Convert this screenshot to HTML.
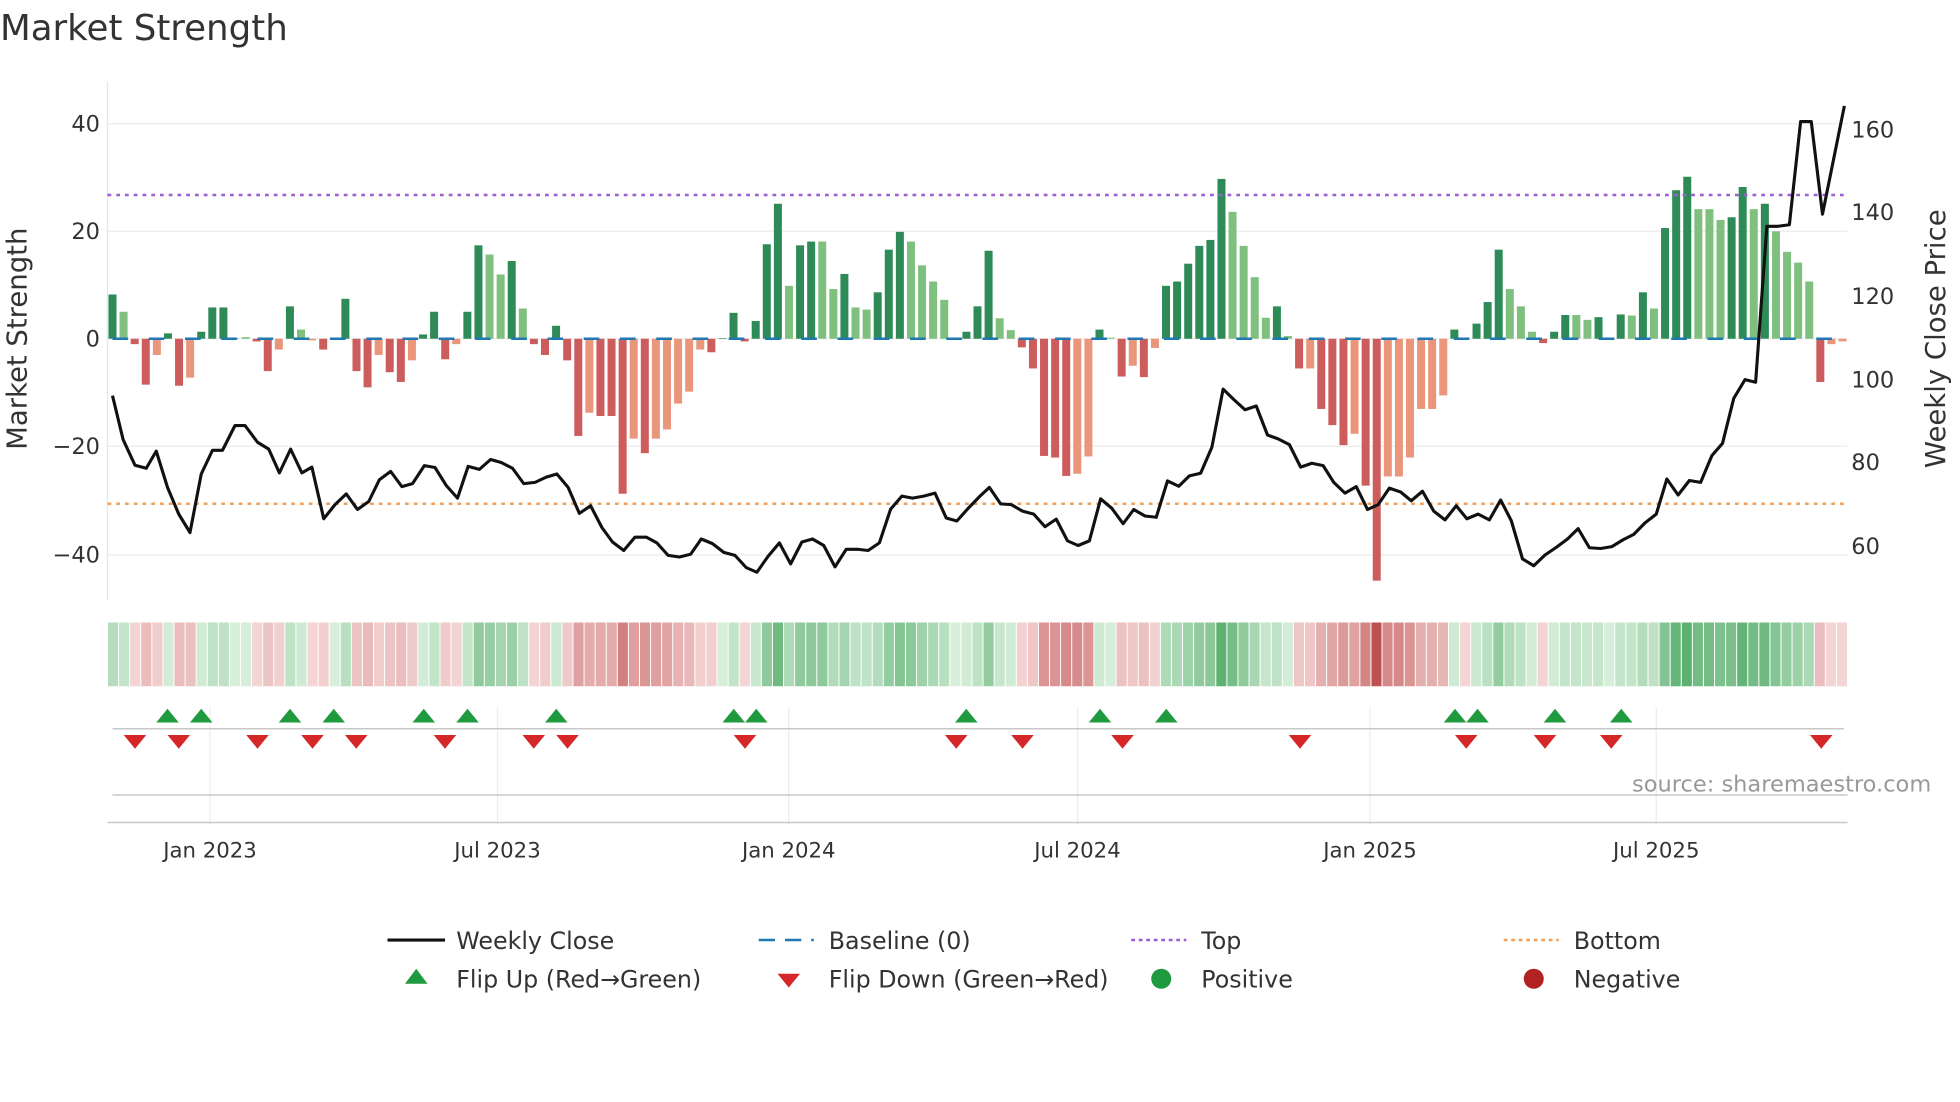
<!DOCTYPE html>
<html><head><meta charset="utf-8"><style>
html,body{margin:0;padding:0;background:#fff;}
svg{display:block;}
text{font-family:"DejaVu Sans","Liberation Sans",sans-serif;fill:#333;}
</style></head><body>
<svg id="s" width="1960" height="1102" viewBox="0 0 1568 881.6" xmlns="http://www.w3.org/2000/svg">
<text x="0" y="32" font-size="28.5">Market Strength</text>
<g id="grid" stroke="#ececec" stroke-width="1">
<line x1="86" y1="99" x2="1478" y2="99"/><line x1="86" y1="185" x2="1478" y2="185"/>
<line x1="86" y1="271" x2="1478" y2="271"/><line x1="86" y1="357" x2="1478" y2="357"/>
<line x1="86" y1="444" x2="1478" y2="444"/>
</g>
<line x1="86" y1="65" x2="86" y2="480" stroke="#e6e6e6"/>
<g font-size="18" text-anchor="end">
<text x="80" y="105">40</text><text x="80" y="191">20</text><text x="80" y="277">0</text>
<text x="80" y="363">−20</text><text x="80" y="450">−40</text>
</g>
<g font-size="18">
<text x="1481" y="110">160</text><text x="1481" y="176">140</text><text x="1481" y="243">120</text>
<text x="1481" y="310">100</text><text x="1481" y="376">80</text><text x="1481" y="443">60</text>
</g>
<text transform="translate(21,271) rotate(-90)" font-size="22" text-anchor="middle">Market Strength</text>
<text transform="translate(1556,271) rotate(-90)" font-size="22" text-anchor="middle">Weekly Close Price</text>
<g id="bars"></g>
<line x1="86" y1="156" x2="1478" y2="156" stroke="#9a5fd6" stroke-width="2" stroke-dasharray="3,4"/>
<line x1="86" y1="403" x2="1478" y2="403" stroke="#f0a05a" stroke-width="2" stroke-dasharray="3,4"/>
<line x1="90" y1="271" x2="1478" y2="271" stroke="#1f77b4" stroke-width="2" stroke-dasharray="12.5,16.5"/>
<polyline id="price" fill="none" stroke="#111" stroke-width="2.5" stroke-linejoin="round"/>
<g id="heat"></g>
<g stroke="#ececec">
<line x1="168" y1="566" x2="168" y2="660"/><line x1="398" y1="566" x2="398" y2="660"/>
<line x1="631" y1="566" x2="631" y2="660"/><line x1="862" y1="566" x2="862" y2="660"/>
<line x1="1096" y1="566" x2="1096" y2="660"/><line x1="1325" y1="566" x2="1325" y2="660"/>
</g>
<line x1="90" y1="583" x2="1475" y2="583" stroke="#c8c8c8" stroke-width="1.2"/>
<line x1="90" y1="636" x2="1478" y2="636" stroke="#c8c8c8" stroke-width="1.2"/>
<line x1="86" y1="658" x2="1478" y2="658" stroke="#c8c8c8" stroke-width="1.2"/>
<g id="marks"></g>
<text x="1545" y="633" font-size="18" text-anchor="end" style="fill:#999">source: sharemaestro.com</text>
<g font-size="17" text-anchor="middle">
<text x="168" y="686">Jan 2023</text><text x="398" y="686">Jul 2023</text><text x="631" y="686">Jan 2024</text>
<text x="862" y="686">Jul 2024</text><text x="1096" y="686">Jan 2025</text><text x="1325" y="686">Jul 2025</text>
</g>
<g font-size="19">
<line x1="310" y1="752" x2="356" y2="752" stroke="#111" stroke-width="2.5"/>
<text x="365" y="759">Weekly Close</text>
<line x1="607" y1="752" x2="651" y2="752" stroke="#1f77b4" stroke-width="2" stroke-dasharray="13,8"/>
<text x="663" y="759">Baseline (0)</text>
<line x1="905" y1="752" x2="949" y2="752" stroke="#9a5fd6" stroke-width="2" stroke-dasharray="3,3"/>
<text x="961" y="759">Top</text>
<line x1="1203" y1="752" x2="1247" y2="752" stroke="#f0a05a" stroke-width="2" stroke-dasharray="3,3"/>
<text x="1259" y="759">Bottom</text>
<polygon points="324,787 342,787 333,775" fill="#1f9a3e"/>
<text x="365" y="790">Flip Up (Red→Green)</text>
<polygon points="622,779 640,779 631,790" fill="#d62728"/>
<text x="663" y="790">Flip Down (Green→Red)</text>
<circle cx="929" cy="783" r="8" fill="#1f9a3e"/>
<text x="961" y="790">Positive</text>
<circle cx="1227" cy="783" r="8" fill="#b22222"/>
<text x="1259" y="790">Negative</text>
</g>
</svg>
<script>
var raw="8.2d,5l,-1r,-8.5r,-3o,1d,-8.7r,-7.2o,1.3d,5.8d,5.8d,0.1d,0.3l,-0.5r,-6r,-2o,6d,1.7l,-0.3o,-2r,0.1d,7.4d,-6r,-9r,-3o,-6.2r,-8r,-4o,0.8d,5d,-3.8r,-1o,5d,17.3d,15.6l,11.9l,14.4d,5.6l,-1r,-3r,2.4d,-4r,-18r,-13.7o,-14.3r,-14.3r,-28.7r,-18.5o,-21.2r,-18.5o,-16.8o,-12o,-9.8o,-2o,-2.5r,0.1d,4.8d,-0.5r,3.3d,17.5d,25d,9.8l,17.3d,18d,18l,9.2l,12d,5.8l,5.4l,8.6d,16.5d,19.8d,18l,13.6l,10.6l,7.2l,0.1l,1.3d,6d,16.3d,3.8l,1.6l,-1.6r,-5.5r,-21.7r,-22r,-25.4r,-25o,-21.8o,1.7d,0.2l,-7r,-5o,-7.1r,-1.7o,9.8d,10.6d,13.9d,17.2d,18.3d,29.6d,23.5l,17.2l,11.4l,3.9l,6d,0.5l,-5.5r,-5.5o,-13r,-16r,-19.7r,-17.6o,-27.2r,-44.8r,-25.5o,-25.5o,-22o,-13o,-13o,-10.5o,1.7d,-0.2r,2.8d,6.8d,16.5d,9.2l,6l,1.3l,-0.8r,1.3d,4.4d,4.4l,3.5l,4d,0.1d,4.5d,4.3l,8.6d,5.6l,20.5d,27.5d,30d,24l,24l,22l,22.5d,28.1d,24l,25d,19.9l,16.1l,14.1l,10.6l,-8r,-1o,-0.5o".split(",");
var NS="http://www.w3.org/2000/svg";
function el(t,a,p){var e=document.createElementNS(NS,t);for(var k in a)e.setAttribute(k,a[k]);p.appendChild(e);return e;}
var cols={d:"#2e8b57",l:"#80c07f",r:"#cd5c5c",o:"#e9967a"};
var n=raw.length,bars=document.getElementById("bars"),heat=document.getElementById("heat");
var step=(1474-90)/(n-1);
var hw=(1478-86)/n;
function mix(a,b,t){return "rgb("+[0,1,2].map(function(i){return Math.round(a[i]+(b[i]-a[i])*t)}).join(",")+")";}
for(var i=0;i<n;i++){
 var s=raw[i],v=parseFloat(s),c=s.slice(-1),x=90+i*step,h=Math.abs(v)*4.32;
 el("rect",{x:x-3.2,y:v>=0?271-h:271,width:6.4,height:Math.max(h,0.5),fill:cols[c]},bars);
 var col=v>=0?mix([214,238,218],[92,176,112],Math.min(v/30,1)):mix([244,214,214],[190,80,78],Math.min(-v/45,1));
 el("rect",{x:86+i*hw+0.4,y:498,width:hw-0.8,height:51,fill:col},heat);
}
var p1=[[180,1035],[197,1150],[216,1217],[234,1225],[250,1180],[268,1275],[286,1345],[304,1393],[322,1240],[340,1178],[356,1178],[376,1113],[392,1113],[412,1157],[430,1175],[447,1237],[465,1175],[483,1237],[499,1222],[518,1357],[536,1320],[554,1292],[572,1333],[590,1312],[607,1255],[625,1233],[643,1273],[660,1265],[679,1218],[696,1223],[714,1270],[732,1303],[749,1220],[767,1228],[785,1202],[802,1210],[820,1225],[838,1265],[856,1262],[874,1248],[891,1240],[909,1275],[927,1343],[945,1323],[963,1380],[980,1418],[998,1440],[1016,1405],[1034,1405],[1051,1420],[1069,1453],[1087,1457],[1105,1450],[1122,1410],[1140,1422],[1158,1445],[1176,1453],[1194,1485],[1211,1497],[1229,1455],[1247,1420],[1265,1475],[1283,1418],[1300,1410],[1318,1427],[1336,1483],[1354,1437],[1372,1437],[1389,1440],[1407,1420],[1425,1332],[1443,1298],[1460,1303],[1478,1298],[1496,1290],[1514,1355],[1531,1363],[1549,1330]];
var p2=[[0,1298],[15,1275],[33,1318],[50,1320],[68,1337],[86,1345],[104,1378],[122,1358],[140,1415],[157,1427],[175,1415],[193,1305],[211,1330],[229,1370],[246,1333],[264,1350],[282,1353],[300,1258],[318,1272],[335,1245],[353,1238],[371,1170],[389,1018],[406,1045],[424,1072],[442,1062],[460,1138],[477,1148],[495,1163],[513,1222],[531,1212],[549,1218],[566,1262],[584,1290],[602,1273],[620,1333],[637,1320],[655,1277],[673,1287],[690,1310],[708,1285],[726,1337],[744,1360],[762,1323],[779,1357],[797,1345],[815,1360],[833,1308],[850,1362],[868,1462],[886,1480],[904,1452],[922,1432],[940,1410],[957,1383],[975,1433],[993,1435],[1011,1430],[1029,1412],[1046,1398],[1064,1368],[1082,1345],[1099,1253],[1117,1295],[1135,1257],[1153,1262],[1171,1192],[1188,1160],[1206,1042],[1224,993],[1241,1000],[1259,592],[1277,592],[1295,588],[1313,318],[1330,318],[1348,560],[1383,277]];
var pts=[];
p1.forEach(function(p){pts.push((p[0]/2).toFixed(1)+","+(p[1]/3.27).toFixed(1));});
p2.forEach(function(p){pts.push((784+p[0]/2).toFixed(1)+","+(p[1]/3.27).toFixed(1));});
document.getElementById("price").setAttribute("points",pts.join(" "));
var m=document.getElementById("marks");
[134,161,232,267,339,374,445,587,605,773,880,933,1164,1182,1244,1297].forEach(function(x){el("polygon",{points:(x-9)+",578 "+(x+9)+",578 "+x+",567",fill:"#1f9a3e"},m);});
[108,143,206,250,285,356,427,454,596,765,818,898,1040,1173,1236,1289,1457].forEach(function(x){el("polygon",{points:(x-9)+",588 "+(x+9)+",588 "+x+",599",fill:"#d62728"},m);});
</script>
</body></html>
